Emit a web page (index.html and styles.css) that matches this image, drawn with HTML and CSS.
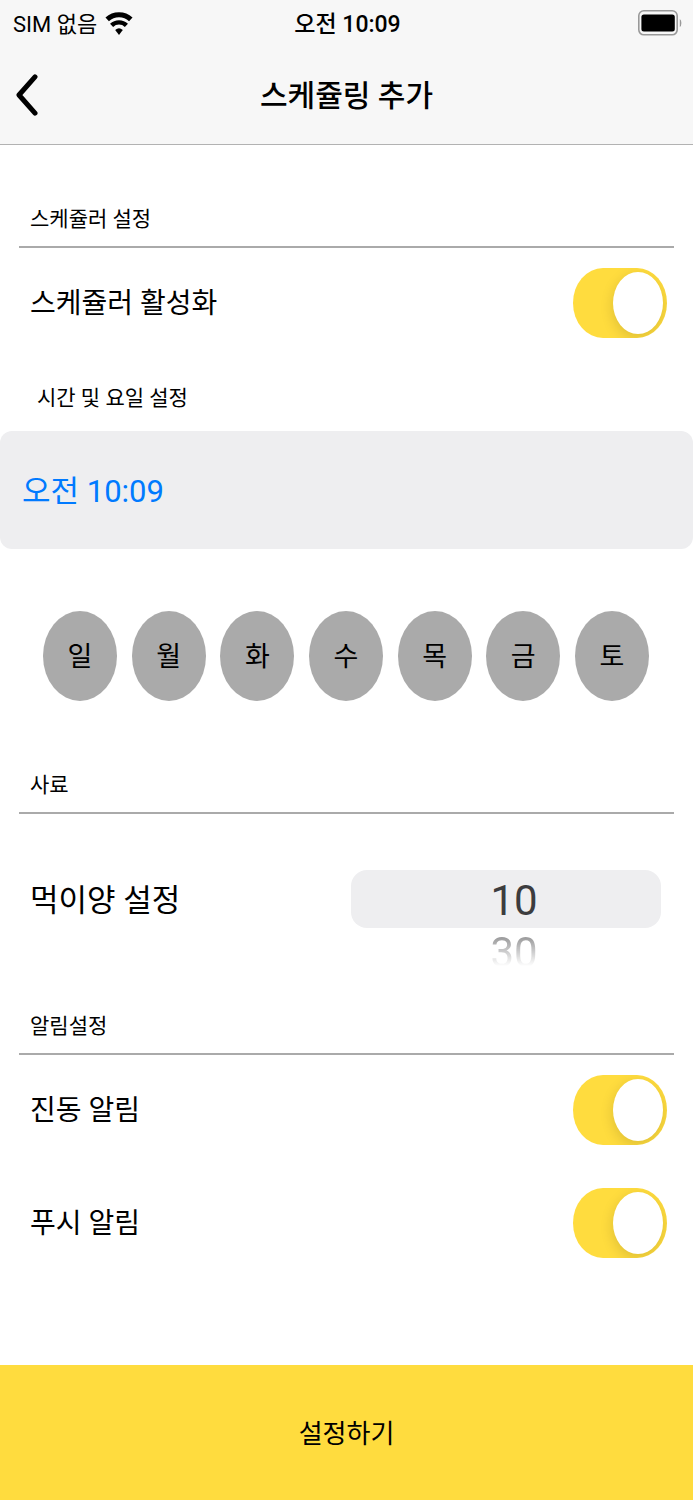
FILE: index.html
```html
<!DOCTYPE html>
<html lang="ko">
<head>
    <meta charset="UTF-8">
    <meta name="viewport" content="width=device-width, initial-scale=1.0">
    <title>스케쥴링 추가</title>
    <link rel="stylesheet" href="styles.css">
</head>
<body>
    <header class="header">
        <div class="status-bar">
            <div class="carrier">
                <span>SIM 없음</span>
                <svg class="wifi" viewBox="0 0 28 26" aria-hidden="true">
                    <path d="M2.2 9.4 A17 17 0 0 1 25.8 9.4" fill="none" stroke="#000" stroke-width="5"/>
                    <path d="M6.6 15.4 A10.5 10.5 0 0 1 21.4 15.4" fill="none" stroke="#000" stroke-width="4.4"/>
                    <path d="M10.2 20 Q14 16.4 17.8 20 L14 25 Z" fill="#000"/>
                </svg>
            </div>
            <span class="clock">오전 10:09</span>
            <svg class="battery" viewBox="0 0 44 26" aria-hidden="true">
                <rect x="0.8" y="0.8" width="38.4" height="24" rx="5" fill="none" stroke="#999" stroke-width="1.6"/>
                <rect x="3.4" y="4.4" width="33.4" height="17" rx="2.5" fill="#000"/>
                <path d="M41.8 9 Q43.4 10 43.4 13 Q43.4 16 41.8 17 Z" fill="#999"/>
            </svg>
        </div>
        <div class="nav">
            <button class="back" type="button" aria-label="뒤로">
                <svg viewBox="0 0 22 42" aria-hidden="true">
                    <path d="M19 2.8 L3 21 L19 39.2" fill="none" stroke="#000" stroke-width="5" stroke-linecap="round" stroke-linejoin="round"/>
                </svg>
            </button>
            <h1>스케쥴링 추가</h1>
        </div>
    </header>

    <main>
        <!-- 스케쥴러 설정 -->
        <section class="section">
            <h2>스케쥴러 설정</h2>
            <div class="row">
                <label for="active">스케쥴러 활성화</label>
                <input class="switch" type="checkbox" id="active" checked>
            </div>
        </section>

        <!-- 시간 및 요일 -->
        <section class="schedule">
            <h2>시간 및 요일 설정</h2>
            <button class="time" type="button">오전 10:09</button>
            <div class="days">
                <button type="button">일</button>
                <button type="button">월</button>
                <button type="button">화</button>
                <button type="button">수</button>
                <button type="button">목</button>
                <button type="button">금</button>
                <button type="button">토</button>
            </div>
        </section>

        <!-- 사료 -->
        <section class="section">
            <h2>사료</h2>
            <div class="row feed">
                <label for="amount">먹이양 설정</label>
                <div class="picker">
                    <select id="amount">
                        <option selected>10</option>
                        <option>30</option>
                    </select>
                    <span class="next" aria-hidden="true">30</span>
                </div>
            </div>
        </section>

        <!-- 알림설정 -->
        <section class="section">
            <h2>알림설정</h2>
            <div class="row">
                <label for="vibrate">진동 알림</label>
                <input class="switch" type="checkbox" id="vibrate" checked>
            </div>
            <div class="row">
                <label for="push">푸시 알림</label>
                <input class="switch" type="checkbox" id="push" checked>
            </div>
        </section>
    </main>

    <button class="submit" type="button">설정하기</button>
</body>
</html>
```

FILE: styles.css
```css
* {
    box-sizing: border-box;
    margin: 0;
    padding: 0;
}

body {
    display: flex;
    flex-direction: column;
    min-height: 100vh;
    background-color: white;
    color: black;
    font-family: Roboto, "Noto Sans CJK KR", sans-serif;
    font-size: 28px;
}

button,
select {
    border: none;
    font-family: inherit;
    color: inherit;
    cursor: pointer;
}

.header {
    background-color: #f7f7f7;
    border-bottom: 1px solid #b2b2b2;
}

.status-bar {
    display: grid;
    grid-template-columns: 1fr auto 1fr;
    align-items: center;
    height: 46px;
    padding: 0 11px 0 13px;
    font-size: 22px;
}

.carrier {
    display: flex;
    align-items: center;
    gap: 8px;
}

.carrier span,
.clock {
    padding-bottom: 3px;
}

.wifi {
    width: 28px;
    height: 26px;
}

.clock {
    font-size: 23px;
    font-weight: 500;
}

.battery {
    width: 44px;
    height: 26px;
    justify-self: end;
}

.nav {
    display: grid;
    grid-template-columns: 60px 1fr 60px;
    align-items: center;
    height: 98px;
}

.back {
    display: flex;
    padding: 0 16px;
    background: none;
}

.back svg {
    width: 22px;
    height: 42px;
}

h1 {
    padding-bottom: 4px;
    font-size: 30px;
    font-weight: 500;
    text-align: center;
}

h2 {
    font-size: 21px;
    font-weight: 400;
    line-height: 32px;
}

.section {
    padding: 58px 19px 0;
}

.section h2 {
    padding: 0 11px 11px;
    border-bottom: 2px solid #aaa;
}

.row {
    display: flex;
    align-items: center;
    justify-content: space-between;
    height: 113px;
    padding: 0 7px 4px 11px;
}

.row label {
    padding-bottom: 3px;
}

.switch {
    appearance: none;
    width: 94px;
    height: 70px;
    padding: 4px;
    border-radius: 30px / 35px;
    background-color: #ccc;
    overflow: hidden;
    cursor: pointer;
}

.switch::before {
    content: "";
    display: block;
    width: 50px;
    height: 62px;
    border-radius: 50%;
    background-color: white;
    box-shadow: 0 4px 14px rgba(0, 0, 0, 0.14);
}

.switch:checked {
    background-color: #ffdc3e;
}

.switch:checked::before {
    margin-left: auto;
}

.schedule h2 {
    padding: 21px 37px 17px;
}

.time {
    display: block;
    width: 100%;
    height: 118px;
    padding: 0 22px 3px;
    border-radius: 12px;
    background-color: #eeeef0;
    color: #007aff;
    font-size: 31px;
    text-align: left;
}

.days {
    display: flex;
    justify-content: space-between;
    padding: 62px 44px 10px 43px;
}

.days button {
    width: 74px;
    height: 90px;
    padding-bottom: 3px;
    border-radius: 50%;
    background-color: #aaa;
    font-size: 27px;
}

.feed {
    height: 138px;
    padding: 44px 13px 12px 11px;
    font-size: 31px;
}

.picker {
    position: relative;
    width: 310px;
    color: #3c3c3e;
    font-size: 42px;
}

.picker select {
    display: block;
    appearance: none;
    width: 100%;
    height: 58px;
    padding: 3px 0 0 16px;
    border-radius: 16px;
    background-color: #eeeef0;
    font-size: inherit;
    text-align: center;
    text-align-last: center;
}

/* upcoming value, fading out under the selected one */
.next {
    position: absolute;
    top: 100%;
    left: 0;
    width: 100%;
    padding-left: 16px;
    line-height: 50px;
    text-align: center;
    opacity: 0.5;
    -webkit-mask-image: linear-gradient(black 20%, transparent 76%);
    mask-image: linear-gradient(black 20%, transparent 76%);
}

.submit {
    height: 135px;
    margin-top: auto;
    padding-bottom: 3px;
    background-color: #ffdc3e;
    font-size: 26px;
}
```
